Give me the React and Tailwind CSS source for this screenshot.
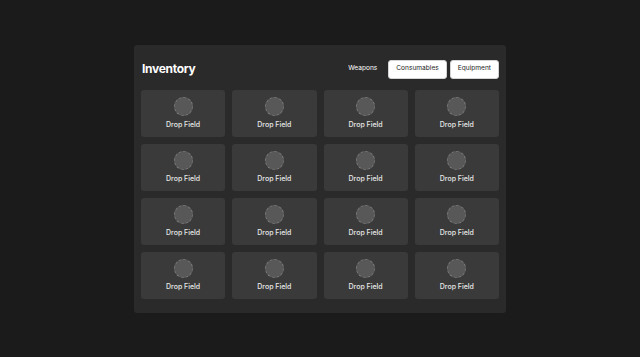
import { useState } from "react";

const TABS = ["Weapons", "Consumables", "Equipment"];

function DropField() {
  return (
    <div className="h-[47px] rounded-[3px] bg-[#3a3a3a] flex flex-col items-center pt-[7px]">
      <div className="w-[19px] h-[19px] rounded-full bg-[#585858] border border-dashed border-[#7a7a7a]" />
      <span className="mt-[4px] text-[7px] leading-[9px] font-medium text-[#e8e8e8]">Drop Field</span>
    </div>
  );
}

export default function App() {
  const [tab, setTab] = useState("Weapons");

  return (
    <div
      className="min-h-screen bg-[#1b1b1b] flex items-center justify-center"
      style={{ fontFamily: "Inter, 'Noto Sans', sans-serif" }}
    >
      <div className="w-[372px] h-[268px] bg-[#2a2a2a] rounded-[3px] px-[7px] pt-[15px] pb-[14px]">
        {/* Header */}
        <div className="h-[19px] flex items-center justify-between">
          <h1 className="text-[12px] leading-[19px] font-bold text-white tracking-tight pl-[1px] -mt-[1px]">Inventory</h1>
          <div className="flex items-center gap-[3px]">
            {TABS.map((t) => (
              <button
                key={t}
                onClick={() => setTab(t)}
                className={
                  t === "Weapons"
                    ? "h-[19px] px-[8px] rounded-[3px] text-[6.6px] font-normal text-white"
                    : "h-[19px] px-[7px] rounded-[3px] text-[6.6px] font-normal bg-white text-[#222] border border-[#d4d4d4]"
                }
              >
                {t}
              </button>
            ))}
          </div>
        </div>

        {/* Grid */}
        <div className="mt-[11px] grid grid-cols-4 gap-[7px]">
          {Array.from({ length: 16 }).map((_, i) => (
            <DropField key={i} />
          ))}
        </div>
      </div>
    </div>
  );
}
